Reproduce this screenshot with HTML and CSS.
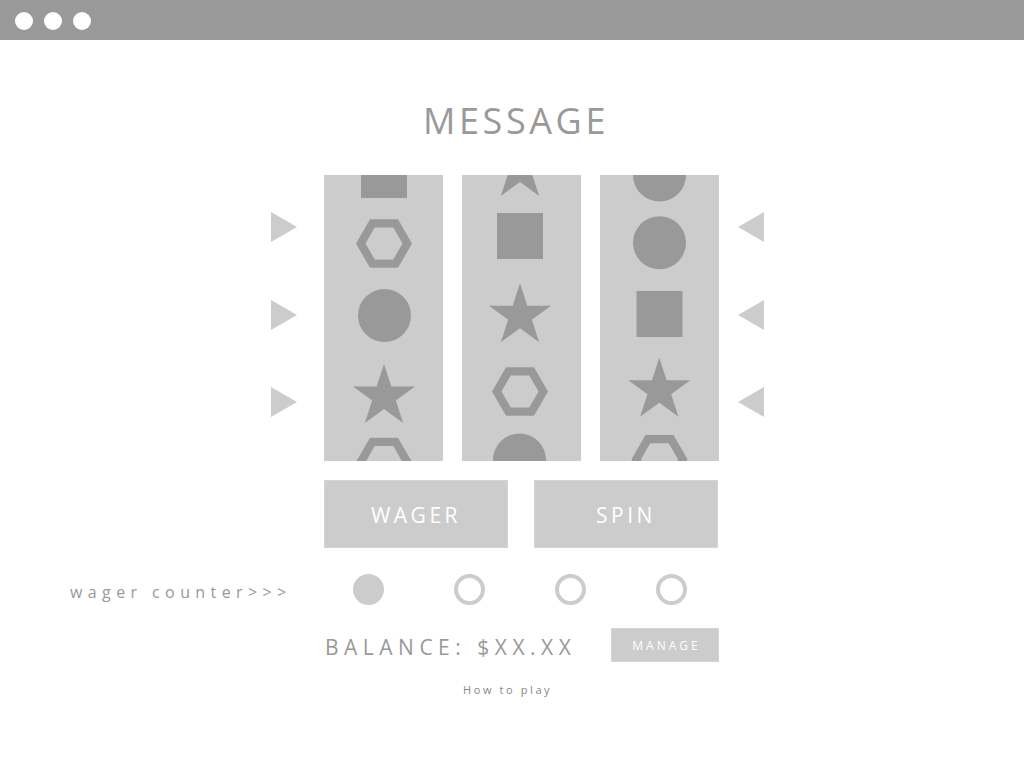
FILE: index.html
```html
<!DOCTYPE html>
<html lang="en">
<head>
<meta charset="utf-8">
<title>Slot machine</title>
<link rel="stylesheet" href="styles.css">
</head>
<body>
<header class="titlebar">
  <span class="dot"></span><span class="dot"></span><span class="dot"></span>
</header>
<main class="page">
  <h1 class="message">MESSAGE</h1>

  <section class="machine">
    <div class="arrows">
      <svg class="arrow" viewBox="0 0 26 30"><polygon points="0,0 26,15 0,30"/></svg>
      <svg class="arrow" viewBox="0 0 26 30"><polygon points="0,0 26,15 0,30"/></svg>
      <svg class="arrow" viewBox="0 0 26 30"><polygon points="0,0 26,15 0,30"/></svg>
    </div>

    <div class="reels">
      <svg class="reel" viewBox="0 0 119 286">
        <rect width="119" height="286" class="reel-bg"/>
        <g class="sym">
          <rect x="37" y="-23" width="46" height="46"/>
          <path transform="translate(60 68.5)" fill-rule="evenodd" d="M28,0 L14,24.25 L-14,24.25 L-28,0 L-14,-24.25 L14,-24.25 Z M18.5,0 L9.25,-16.02 L-9.25,-16.02 L-18.5,0 L-9.25,16.02 L9.25,16.02 Z"/>
          <circle cx="60.5" cy="140.5" r="26.5"/>
          <polygon transform="translate(60 221.6)" points="0,-32.6 7.32,-10.08 31,-10.07 11.85,3.85 19.16,26.37 0,12.46 -19.16,26.37 -11.85,3.85 -31,-10.07 -7.32,-10.08"/>
          <path transform="translate(60 287)" fill-rule="evenodd" d="M28,0 L14,24.25 L-14,24.25 L-28,0 L-14,-24.25 L14,-24.25 Z M18.5,0 L9.25,-16.02 L-9.25,-16.02 L-18.5,0 L-9.25,16.02 L9.25,16.02 Z"/>
        </g>
      </svg>
      <svg class="reel" viewBox="0 0 119 286">
        <rect width="119" height="286" class="reel-bg"/>
        <g class="sym">
          <polygon transform="translate(58 -5.4)" points="0,-32.6 7.32,-10.08 31,-10.07 11.85,3.85 19.16,26.37 0,12.46 -19.16,26.37 -11.85,3.85 -31,-10.07 -7.32,-10.08"/>
          <rect x="35" y="38" width="46" height="46"/>
          <polygon transform="translate(58 140.9)" points="0,-32.6 7.32,-10.08 31,-10.07 11.85,3.85 19.16,26.37 0,12.46 -19.16,26.37 -11.85,3.85 -31,-10.07 -7.32,-10.08"/>
          <path transform="translate(58 216.5)" fill-rule="evenodd" d="M28,0 L14,24.25 L-14,24.25 L-28,0 L-14,-24.25 L14,-24.25 Z M18.5,0 L9.25,-16.02 L-9.25,-16.02 L-18.5,0 L-9.25,16.02 L9.25,16.02 Z"/>
          <circle cx="57.5" cy="285" r="26.5"/>
        </g>
      </svg>
      <svg class="reel" viewBox="0 0 119 286">
        <rect width="119" height="286" class="reel-bg"/>
        <g class="sym">
          <circle cx="59.5" cy="0" r="26.5"/>
          <circle cx="59.5" cy="67.7" r="26.5"/>
          <rect x="36.5" y="116" width="46" height="46"/>
          <polygon transform="translate(59.3 215.3)" points="0,-32.6 7.32,-10.08 31,-10.07 11.85,3.85 19.16,26.37 0,12.46 -19.16,26.37 -11.85,3.85 -31,-10.07 -7.32,-10.08"/>
          <path transform="translate(59.5 284.3)" fill-rule="evenodd" d="M28,0 L14,24.25 L-14,24.25 L-28,0 L-14,-24.25 L14,-24.25 Z M18.5,0 L9.25,-16.02 L-9.25,-16.02 L-18.5,0 L-9.25,16.02 L9.25,16.02 Z"/>
        </g>
      </svg>
    </div>

    <div class="arrows arrows-right">
      <svg class="arrow" viewBox="0 0 26 30"><polygon points="26,0 0,15 26,30"/></svg>
      <svg class="arrow" viewBox="0 0 26 30"><polygon points="26,0 0,15 26,30"/></svg>
      <svg class="arrow" viewBox="0 0 26 30"><polygon points="26,0 0,15 26,30"/></svg>
    </div>
  </section>

  <div class="actions">
    <button class="btn">WAGER</button>
    <button class="btn">SPIN</button>
  </div>

  <div class="counter">
    <span class="counter-label">wager counter&gt;&gt;&gt;</span>
    <div class="pips">
      <span class="pip pip-on"></span>
      <span class="pip"></span>
      <span class="pip"></span>
      <span class="pip"></span>
    </div>
  </div>

  <div class="balance">
    <span class="balance-text">BALANCE: $XX.XX</span>
    <button class="manage">MANAGE</button>
  </div>

  <a class="howto">How to play</a>
</main>
</body>
</html>
```

FILE: styles.css
```css
* { box-sizing: border-box; }

html, body {
  margin: 0;
  padding: 0;
  background: #ffffff;
  font-family: "Open Sans", "Liberation Sans", sans-serif;
  color: #999999;
}

.titlebar {
  height: 40px;
  background: #999999;
  display: flex;
  align-items: center;
  padding: 2px 0 0 15px;
  gap: 11px;
}

.dot {
  width: 18px;
  height: 18px;
  border-radius: 50%;
  background: #ffffff;
}

.page {
  display: flex;
  flex-direction: column;
  align-items: flex-start;
}

.message {
  align-self: stretch;
  margin: 59px 0 0;
  padding-left: 8px;
  font-size: 36px;
  line-height: 44px;
  font-weight: 400;
  letter-spacing: 3.6px;
  text-align: center;
  color: #999999;
}

.machine {
  margin: 32px 0 0 271px;
  display: flex;
  align-items: flex-start;
}

.arrows {
  width: 26px;
  margin-right: 27px;
  padding-top: 37px;
  display: flex;
  flex-direction: column;
  gap: 57.5px;
}

.arrows-right {
  margin: 0 0 0 19px;
}

.arrow {
  display: block;
  width: 26px;
  height: 30px;
  fill: #cccccc;
}

.reels {
  display: flex;
  gap: 19px;
}

.reel {
  display: block;
  width: 119px;
  height: 286px;
}

.reel-bg { fill: #cccccc; }
.sym { fill: #999999; }

.actions {
  margin: 19px 0 0 324px;
  display: flex;
  gap: 26px;
}

.btn {
  width: 184px;
  height: 68px;
  background: #cccccc;
  border: 1px solid #d4d4d4;
  color: #ffffff;
  font-family: inherit;
  font-size: 21px;
  letter-spacing: 3.5px;
  padding: 2px 0 0 0;
}

.counter {
  margin-top: 26px;
  padding-left: 70px;
  display: flex;
  align-items: center;
  height: 31px;
}

.counter-label {
  width: 283px;
  margin-top: 4px;
  font-size: 16px;
  line-height: 20px;
  letter-spacing: 5.4px;
  white-space: nowrap;
}

.pips {
  display: flex;
  gap: 70px;
}

.pip {
  width: 31px;
  height: 31px;
  border-radius: 50%;
  border: 4px solid #cccccc;
}

.pip-on {
  background: #cccccc;
}

.balance {
  margin: 23px 0 0 325px;
  display: flex;
  align-items: center;
  height: 34px;
}

.balance-text {
  font-size: 21px;
  line-height: 34px;
  padding-top: 3px;
  letter-spacing: 5.5px;
  width: 286px;
  white-space: nowrap;
}

.manage {
  width: 108px;
  height: 34px;
  background: #cccccc;
  border: 1px solid #d4d4d4;
  color: #ffffff;
  font-family: inherit;
  font-size: 12px;
  letter-spacing: 3px;
  padding: 0 0 0 3px;
}

.howto {
  margin: 21px 0 0 463px;
  font-size: 11px;
  line-height: 14px;
  letter-spacing: 2.6px;
  color: #888888;
  white-space: nowrap;
}
```
